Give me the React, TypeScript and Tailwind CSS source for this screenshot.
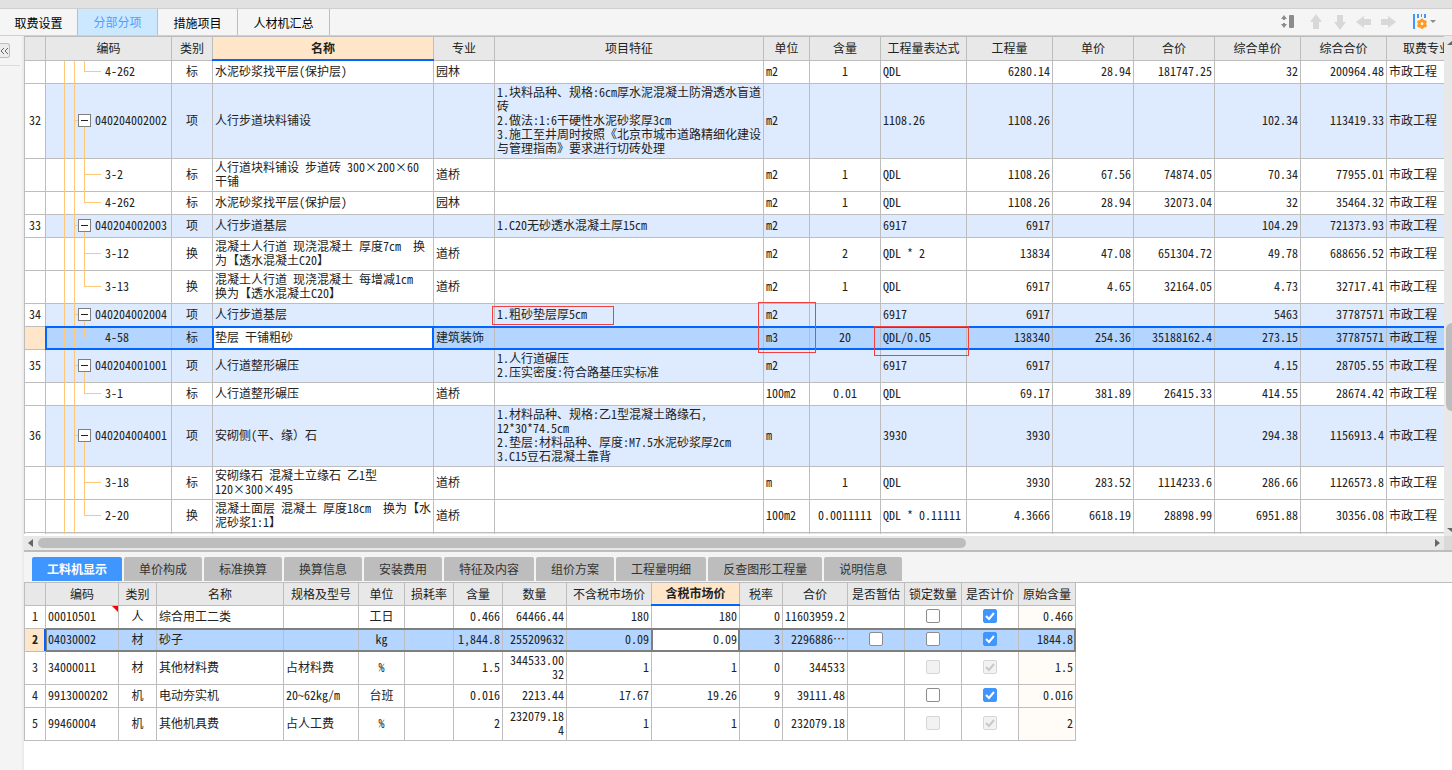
import type { ReactNode } from "react";
import clsx from "clsx";

type Align = "left" | "center" | "right";

type Column = {
  title: string;
  width: string;
  align: Align;
};

type BillRow = {
  no?: string;
  code: string;
  last?: boolean;
  selected?: boolean;
  cells: string[];
};

type ResourceRow = {
  no: string;
  selected?: boolean;
  marked?: boolean;
  cells: string[];
  estimate?: boolean;
  locked: boolean;
  original: string;
};

const ALIGN: Record<Align, string> = {
  left: "text-left",
  center: "text-center",
  right: "text-right"
};

const VIEW_TABS = [
  { label: "取费设置", width: "w-[78px]" },
  { label: "分部分项", width: "w-[80px]" },
  { label: "措施项目", width: "w-[80px]" },
  { label: "人材机汇总", width: "w-[92px]" }
];

const DETAIL_TABS = [
  "工料机显示",
  "单价构成",
  "标准换算",
  "换算信息",
  "安装费用",
  "特征及内容",
  "组价方案",
  "工程量明细",
  "反查图形工程量",
  "说明信息"
];

const BILL_COLUMNS: Column[] = [
  { title: "类别", width: "w-[41px]", align: "center" },
  { title: "名称", width: "w-[221px]", align: "left" },
  { title: "专业", width: "w-[61px]", align: "left" },
  { title: "项目特征", width: "w-[269px]", align: "left" },
  { title: "单位", width: "w-[46px]", align: "left" },
  { title: "含量", width: "w-[71px]", align: "center" },
  { title: "工程量表达式", width: "w-[86px]", align: "left" },
  { title: "工程量", width: "w-[86px]", align: "right" },
  { title: "单价", width: "w-[81px]", align: "right" },
  { title: "合价", width: "w-[81px]", align: "right" },
  { title: "综合单价", width: "w-[86px]", align: "right" },
  { title: "综合合价", width: "w-[86px]", align: "right" },
  { title: "取费专业", width: "w-[81px]", align: "left" }
];

const BILL_ROWS: BillRow[] = [
  {
    code: "4-262",
    last: true,
    cells: ["标", "水泥砂浆找平层(保护层)", "园林", "", "m2", "1", "QDL", "6280.14", "28.94", "181747.25", "32", "200964.48", "市政工程"]
  },
  {
    no: "32",
    code: "040204002002",
    cells: [
      "项",
      "人行步道块料铺设",
      "",
      "1.块料品种、规格:6cm厚水泥混凝土防滑透水盲道\n砖\n2.做法:1:6干硬性水泥砂浆厚3cm\n3.施工至井周时按照《北京市城市道路精细化建设\n与管理指南》要求进行切砖处理",
      "m2",
      "",
      "1108.26",
      "1108.26",
      "",
      "",
      "102.34",
      "113419.33",
      "市政工程"
    ]
  },
  {
    code: "3-2",
    cells: ["标", "人行道块料铺设 步道砖 300×200×60\n干铺", "道桥", "", "m2", "1", "QDL", "1108.26", "67.56", "74874.05", "70.34", "77955.01", "市政工程"]
  },
  {
    code: "4-262",
    last: true,
    cells: ["标", "水泥砂浆找平层(保护层)", "园林", "", "m2", "1", "QDL", "1108.26", "28.94", "32073.04", "32", "35464.32", "市政工程"]
  },
  {
    no: "33",
    code: "040204002003",
    cells: ["项", "人行步道基层", "", "1.C20无砂透水混凝土厚15cm", "m2", "", "6917", "6917", "", "", "104.29", "721373.93", "市政工程"]
  },
  {
    code: "3-12",
    cells: ["换", "混凝土人行道 现浇混凝土 厚度7cm  换\n为【透水混凝土C20】", "道桥", "", "m2", "2", "QDL * 2", "13834", "47.08", "651304.72", "49.78", "688656.52", "市政工程"]
  },
  {
    code: "3-13",
    last: true,
    cells: ["换", "混凝土人行道 现浇混凝土 每增减1cm\n换为【透水混凝土C20】", "道桥", "", "m2", "1", "QDL", "6917", "4.65", "32164.05", "4.73", "32717.41", "市政工程"]
  },
  {
    no: "34",
    code: "040204002004",
    cells: ["项", "人行步道基层", "", "1.粗砂垫层厚5cm", "m2", "", "6917", "6917", "", "", "5463", "37787571", "市政工程"]
  },
  {
    code: "4-58",
    last: true,
    selected: true,
    cells: ["标", "垫层 干铺粗砂", "建筑装饰", "", "m3", "20", "QDL/0.05", "138340", "254.36", "35188162.4", "273.15", "37787571", "市政工程"]
  },
  {
    no: "35",
    code: "040204001001",
    cells: ["项", "人行道整形碾压", "", "1.人行道碾压\n2.压实密度:符合路基压实标准", "m2", "", "6917", "6917", "", "", "4.15", "28705.55", "市政工程"]
  },
  {
    code: "3-1",
    last: true,
    cells: ["标", "人行道整形碾压", "道桥", "", "100m2", "0.01", "QDL", "69.17", "381.89", "26415.33", "414.55", "28674.42", "市政工程"]
  },
  {
    no: "36",
    code: "040204004001",
    cells: [
      "项",
      "安砌侧(平、缘）石",
      "",
      "1.材料品种、规格:乙1型混凝土路缘石,\n12*30*74.5cm\n2.垫层:材料品种、厚度:M7.5水泥砂浆厚2cm\n3.C15豆石混凝土靠背",
      "m",
      "",
      "3930",
      "3930",
      "",
      "",
      "294.38",
      "1156913.4",
      "市政工程"
    ]
  },
  {
    code: "3-18",
    cells: ["标", "安砌缘石 混凝土立缘石 乙1型\n120×300×495", "道桥", "", "m", "1", "QDL", "3930", "283.52", "1114233.6", "286.66", "1126573.8", "市政工程"]
  },
  {
    code: "2-20",
    last: true,
    cells: ["换", "混凝土面层 混凝土 厚度18cm  换为【水\n泥砂浆1:1】", "道桥", "", "100m2", "0.0011111", "QDL * 0.11111", "4.3666", "6618.19", "28898.99", "6951.88", "30356.08", "市政工程"]
  },
  { no: "", code: "", cells: [] }
];

const RESOURCE_COLUMNS: Column[] = [
  { title: "编码", width: "w-[73px]", align: "left" },
  { title: "类别", width: "w-[38px]", align: "center" },
  { title: "名称", width: "w-[127px]", align: "left" },
  { title: "规格及型号", width: "w-[75px]", align: "left" },
  { title: "单位", width: "w-[46px]", align: "center" },
  { title: "损耗率", width: "w-[49px]", align: "right" },
  { title: "含量", width: "w-[49px]", align: "right" },
  { title: "数量", width: "w-[64px]", align: "right" },
  { title: "不含税市场价", width: "w-[85px]", align: "right" },
  { title: "含税市场价", width: "w-[88px]", align: "right" },
  { title: "税率", width: "w-[43px]", align: "right" },
  { title: "合价", width: "w-[65px]", align: "right" },
  { title: "是否暂估", width: "w-[57px]", align: "center" },
  { title: "锁定数量", width: "w-[57px]", align: "center" },
  { title: "是否计价", width: "w-[57px]", align: "center" },
  { title: "原始含量", width: "w-[57px]", align: "right" }
];

const RESOURCE_ROWS: ResourceRow[] = [
  {
    no: "1",
    marked: true,
    cells: ["00010501", "人", "综合用工二类", "", "工日", "", "0.466", "64466.44", "180", "180", "0", "11603959.2"],
    locked: false,
    original: "0.466"
  },
  {
    no: "2",
    selected: true,
    cells: ["04030002", "材", "砂子", "", "kg", "", "1,844.8", "255209632", "0.09", "0.09", "3", "2296886⋯"],
    estimate: true,
    locked: false,
    original: "1844.8"
  },
  {
    no: "3",
    cells: ["34000011", "材", "其他材料费", "占材料费", "%", "", "1.5", "344533.00\n32", "1", "1", "0", "344533"],
    locked: true,
    original: "1.5"
  },
  {
    no: "4",
    cells: ["9913000202", "机", "电动夯实机", "20~62kg/m", "台班", "", "0.016", "2213.44", "17.67", "19.26", "9", "39111.48"],
    locked: false,
    original: "0.016"
  },
  {
    no: "5",
    cells: ["99460004", "机", "其他机具费", "占人工费", "%", "", "2", "232079.18\n4", "1", "1", "0", "232079.18"],
    locked: true,
    original: "2"
  }
];

// red boxes drawn over cells, keyed by "code/column"
const MARKS: Record<string, string> = {
  "040204002004/项目特征": "-left-[3px] top-[2px] h-[19px] w-[122px]",
  "040204002004/单位": "-left-[6px] -top-[2px] h-[51px] w-[58px]",
  "4-58/工程量表达式": "-left-[7px] -top-px h-[30px] w-[95px]"
};

const CELL = "relative h-[23px] whitespace-pre border-b border-r border-[#bdbdbd] px-0.5 pt-px pb-[3px] leading-[14px]";

function HeaderCell({ title, active, height }: { title: string; active?: boolean; height: string }) {
  return (
    <th
      scope="col"
      className={clsx(
        "relative whitespace-nowrap border-b border-r border-[#bdbdbd] p-0 leading-[14px]",
        height,
        active
          ? "bg-[#ffe6c8] pb-0.5 font-bold after:absolute after:-bottom-px after:-left-px after:-right-px after:h-0.5 after:bg-[#0066ff]"
          : "bg-[#e8e8e8] pb-px font-normal"
      )}
    >
      {title}
    </th>
  );
}

function TreeCell({ row }: { row: BillRow }) {
  const parent = row.no !== undefined;
  return (
    <td className={CELL}>
      <span aria-hidden="true" className="absolute inset-y-0 -bottom-px left-[18px] w-[11px] border-x border-[#ffc878]" />
      {parent ? (
        <>
          <span aria-hidden="true" className="absolute left-7 top-1/2 h-px w-1 -translate-y-px bg-[#ffc878]" />
          <span aria-hidden="true" className="absolute -bottom-px left-[38px] top-1/2 w-px bg-[#ffc878]" />
        </>
      ) : (
        <>
          <span
            aria-hidden="true"
            className={clsx("absolute left-[38px] top-0 w-px bg-[#ffc878]", row.last ? "bottom-1/2" : "-bottom-px")}
          />
          <span aria-hidden="true" className="absolute left-[38px] top-1/2 h-px w-[17px] -translate-y-px bg-[#ffc878]" />
        </>
      )}
      <div className={clsx("relative flex items-center", parent ? "gap-1 pl-[30px]" : "pl-[57px]")}>
        {parent ? (
          <button
            type="button"
            aria-label={`折叠 ${row.code}`}
            className="flex size-[13px] items-center justify-center border border-[#7f7f7f] bg-white"
          >
            <span className="h-px w-[7px] bg-[#222]" />
          </button>
        ) : null}
        <span>{row.code}</span>
      </div>
    </td>
  );
}

function BillTable() {
  return (
    <table className="w-[1444px] table-fixed border-separate border-spacing-0 border-l border-t border-[#bdbdbd]">
      <colgroup>
        <col className="w-[21px]" />
        <col className="w-[126px]" />
        {BILL_COLUMNS.map((column) => (
          <col key={column.title} className={column.width} />
        ))}
      </colgroup>
      <thead>
        <tr>
          <HeaderCell title="" height="h-6" />
          <HeaderCell title="编码" height="h-6" />
          {BILL_COLUMNS.map((column) => (
            <HeaderCell key={column.title} title={column.title} active={column.title === "名称"} height="h-6" />
          ))}
        </tr>
      </thead>
      <tbody>
        {BILL_ROWS.map((row, index) => (
          <tr
            key={index}
            className={clsx(
              "relative",
              row.selected &&
                "bg-[#b3d5ff] after:pointer-events-none after:absolute after:-top-px after:bottom-0 after:left-5 after:right-0 after:border-2 after:border-[#0066ff]",
              row.no !== undefined && "bg-[#deeafe]"
            )}
          >
            <td className={clsx(CELL, "text-center", row.selected ? "bg-[#ffe6c8]" : "bg-white")}>{row.no}</td>
            <TreeCell row={row} />
            {BILL_COLUMNS.map((column, i) => {
              const mark = MARKS[`${row.code}/${column.title}`];
              return (
                <td
                  key={column.title}
                  className={clsx(
                    CELL,
                    ALIGN[column.align],
                    row.selected &&
                      column.title === "名称" &&
                      "bg-white after:absolute after:inset-y-0 after:-left-px after:-right-px after:border-x-2 after:border-[#0066ff]"
                  )}
                >
                  {row.cells[i]}
                  {mark ? <span className={clsx("absolute z-10 border border-[#f04040]", mark)} /> : null}
                </td>
              );
            })}
          </tr>
        ))}
      </tbody>
    </table>
  );
}

function CheckCell({ label, checked, disabled }: { label: string; checked?: boolean; disabled?: boolean }) {
  return (
    <td className={clsx(CELL, "text-center")}>
      <span className="relative mx-auto block size-[14px]">
        <input
          type="checkbox"
          aria-label={label}
          defaultChecked={checked}
          disabled={disabled}
          className="block size-[14px] appearance-none rounded-[2px] border border-[#8c8c8c] bg-white checked:border-[#4096ff] checked:bg-[#4096ff] disabled:border-[#d6d6d6] disabled:bg-[#f2f2f2]"
        />
        {checked ? (
          <svg
            viewBox="0 0 14 14"
            className={clsx("pointer-events-none absolute inset-0 size-[14px]", disabled ? "stroke-[#c8c8c8]" : "stroke-white")}
            fill="none"
            strokeWidth="2"
          >
            <path d="M3 7l3 3 5-6" />
          </svg>
        ) : null}
      </span>
    </td>
  );
}

function ResourceTable() {
  return (
    <table className="w-[1052px] table-fixed border-separate border-spacing-0 border-l border-[#bdbdbd]">
      <colgroup>
        <col className="w-[21px]" />
        {RESOURCE_COLUMNS.map((column) => (
          <col key={column.title} className={column.width} />
        ))}
      </colgroup>
      <thead>
        <tr>
          <HeaderCell title="" height="h-[23px]" />
          {RESOURCE_COLUMNS.map((column) => (
            <HeaderCell key={column.title} title={column.title} active={column.title === "含税市场价"} height="h-[23px]" />
          ))}
        </tr>
      </thead>
      <tbody>
        {RESOURCE_ROWS.map((row) => (
          <tr
            key={row.no}
            className={clsx(
              "relative",
              row.selected &&
                "bg-[#b3d5ff] after:pointer-events-none after:absolute after:-top-px after:bottom-0 after:left-[21px] after:right-0 after:border-2 after:border-l after:border-[#7f7f7f]"
            )}
          >
            <td
              className={clsx(
                CELL,
                "text-center",
                row.selected && "bg-[#ffe6c8] font-bold after:absolute after:inset-y-0 after:-right-px after:w-0.5 after:bg-[#0066ff]"
              )}
            >
              {row.no}
            </td>
            {row.cells.map((cell, i) => (
              <td
                key={RESOURCE_COLUMNS[i].title}
                className={clsx(
                  CELL,
                  ALIGN[RESOURCE_COLUMNS[i].align],
                  row.selected &&
                    RESOURCE_COLUMNS[i].title === "含税市场价" &&
                    "bg-white after:absolute after:inset-y-0 after:-left-px after:-right-px after:border-x-2 after:border-[#7f7f7f]"
                )}
              >
                {cell}
                {row.marked && i === 0 ? (
                  <svg viewBox="0 0 6 6" className="absolute right-0 top-0 size-1.5 fill-[#ff0000]">
                    <path d="M0 0h6v6z" />
                  </svg>
                ) : null}
              </td>
            ))}
            {row.estimate ? <CheckCell label={`是否暂估 ${row.no}`} /> : <td className={CELL} />}
            <CheckCell label={`锁定数量 ${row.no}`} disabled={row.locked} />
            <CheckCell label={`是否计价 ${row.no}`} checked disabled={row.locked} />
            <td className={clsx(CELL, "text-right", !row.selected && "bg-[#fffcf7]")}>{row.original}</td>
          </tr>
        ))}
      </tbody>
    </table>
  );
}

function ToolButton({ label, children }: { label: string; children: ReactNode }) {
  return (
    <button type="button" aria-label={label} className="flex h-4 items-center justify-center">
      {children}
    </button>
  );
}

function ArrowIcon({ rotate }: { rotate: string }) {
  return (
    <svg viewBox="0 0 16 16" className={clsx("size-4 fill-[#d8d8d8]", rotate)}>
      <path d="M8 0l6 8h-3v7H5V8H2z" />
    </svg>
  );
}

function Toolbar() {
  return (
    <div className="flex h-[27px] items-stretch border-b border-[#d0d0d0] bg-[#f5f5f5] font-['Noto_Sans_CJK_SC',sans-serif]">
      {VIEW_TABS.map((tab) => (
        <button
          key={tab.label}
          type="button"
          className={clsx(
            "border-r border-[#bdbdbd]",
            tab.width,
            tab.label === "分部分项" ? "bg-[#cce8ff] text-[#4d9dff]" : "pt-px text-black"
          )}
        >
          {tab.label}
        </button>
      ))}
      <div className="ml-auto flex items-center gap-2 pr-4">
        <ToolButton label="行高">
          <svg viewBox="0 0 14 14" className="mr-1.5 size-3.5 fill-[#8c8c8c]">
            <path d="M1 4l3-4 3 4zM1 9l3 4 3-4zM3 4h2v1H3zM3 8h2v1H3z" />
            <rect x="9" y="0" width="5" height="13" rx="1" />
          </svg>
        </ToolButton>
        <ToolButton label="上移">
          <ArrowIcon rotate="rotate-0" />
        </ToolButton>
        <ToolButton label="下移">
          <ArrowIcon rotate="rotate-180" />
        </ToolButton>
        <ToolButton label="升级">
          <ArrowIcon rotate="-rotate-90" />
        </ToolButton>
        <ToolButton label="降级">
          <ArrowIcon rotate="rotate-90" />
        </ToolButton>
        <ToolButton label="列设置">
          <svg viewBox="0 0 24 16" className="ml-2 h-4 w-6">
            <path fill="#4096ff" d="M1 0h2v15H1zM5 0h2v4H5zM9 0h1v3H9zM12 0h2v4h-2z" />
            <g fill="#ff9a1f">
              <circle cx="10" cy="6.300" r="1.700" />
              <circle cx="10" cy="13.300" r="1.700" />
              <circle cx="6.900" cy="8" r="1.700" />
              <circle cx="13.100" cy="8" r="1.700" />
              <circle cx="6.900" cy="11.700" r="1.700" />
              <circle cx="13.100" cy="11.700" r="1.700" />
            </g>
            <circle cx="10" cy="9.800" r="2.700" fill="#f5f5f5" stroke="#ff9a1f" strokeWidth="2.500" />
            <path fill="#8c8c8c" d="M18 6h6l-3 3z" />
          </svg>
        </ToolButton>
      </div>
    </div>
  );
}

export default function App() {
  return (
    <div className="flex h-screen flex-col overflow-hidden bg-white font-['Noto_Sans_Mono_CJK_SC','Noto_Sans_CJK_SC',monospace] text-xs text-[#222]">
      <div className="h-[9px] shrink-0 border-b border-[#cfcfcf] bg-[#e1e1e1]" />
      <Toolbar />
      <div className="flex min-h-0 flex-1">
        <aside className="w-6 shrink-0 border-r-2 border-[#ebebeb] bg-[#f4f4f4]">
          <div className="mr-0.5 border-b border-[#dcdcdc] pb-[7px] pt-[7px]">
            <button
              type="button"
              aria-label="展开侧栏"
              className="flex h-[15px] w-2.5 items-center justify-end rounded-r-[3px] border border-l-0 border-[#bdbdbd] bg-[#ececec]"
            >
              <svg viewBox="0 0 8 8" className="size-2 stroke-[#666]" fill="none">
                <path d="M3 1L0 4l3 3M7 1L4 4l3 3" />
              </svg>
            </button>
          </div>
        </aside>
        <main className="flex min-w-0 flex-1 flex-col">
          <section className="flex min-h-0 flex-1">
            <div className="flex min-w-0 flex-1 flex-col">
              <div className="min-h-0 flex-1 overflow-hidden">
                <BillTable />
              </div>
              <div className="mt-0.5 flex h-3.5 shrink-0 items-center bg-[#e8e8e8] pl-1 pr-1">
                <svg viewBox="0 0 5 8" className="h-2 w-[5px] fill-[#666]">
                  <path d="M5 0v8L0 4z" />
                </svg>
                <div className="mx-[5px] flex-1">
                  <div className="h-2.5 w-2/3 rounded-full bg-[#bdbdbd]" />
                </div>
                <svg viewBox="0 0 5 8" className="h-2 w-[5px] fill-[#666]">
                  <path d="M0 0v8l5-4z" />
                </svg>
              </div>
            </div>
            <div className="flex w-2 shrink-0 flex-col overflow-hidden bg-[#e8e8e8]">
              <svg viewBox="0 0 5 4" className="ml-[3px] mt-[5px] h-1 w-[5px] fill-[#666]">
                <path d="M0 4L5 0v4z" />
              </svg>
              <div className="flex-[57]" />
              <div className="ml-0.5 flex-[18] rounded-l-md bg-[#bdbdbd]" />
              <div className="flex-[24]" />
              <svg viewBox="0 0 5 4" className="mb-1 ml-[3px] h-1 w-[5px] fill-[#666]">
                <path d="M0 0h5v4z" />
              </svg>
              <div className="h-3.5 shrink-0 bg-[#dadada]" />
            </div>
          </section>
          <section className="h-[220px] shrink-0 border-t-2 border-[#bdbdbd]">
            <nav className="flex h-[31px] gap-0.5 border-b border-[#bdbdbd] bg-[#f4f4f4] pb-px pl-2 pt-[5px] font-['Noto_Sans_CJK_SC',sans-serif]">
              {DETAIL_TABS.map((label, i) => (
                <button
                  key={label}
                  type="button"
                  className={clsx("rounded-t-[2px] px-[15px]", i === 0 ? "bg-[#4096ff] font-bold text-white" : "bg-[#bdbdbd] text-[#333]")}
                >
                  {label}
                </button>
              ))}
            </nav>
            <ResourceTable />
          </section>
        </main>
      </div>
    </div>
  );
}
